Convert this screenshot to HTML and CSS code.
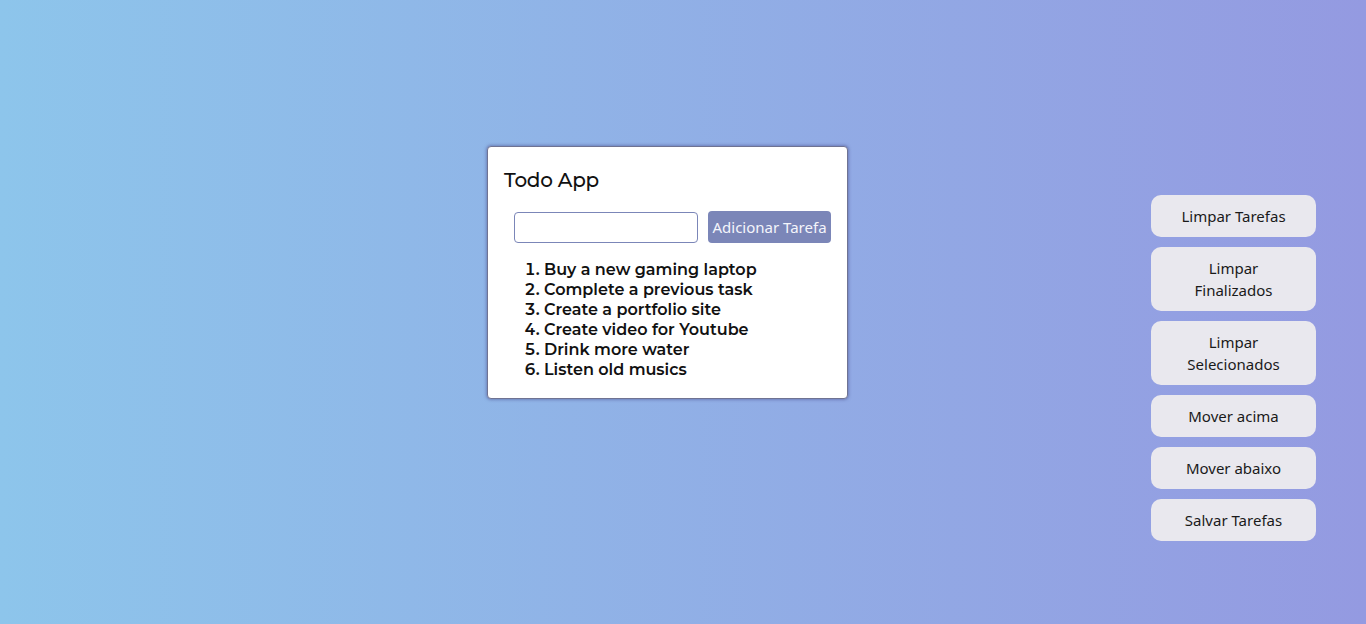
FILE: index.html
```html
<!DOCTYPE html>
<html lang="pt">
<head>
<meta charset="utf-8">
<title>Todo App</title>
<link rel="stylesheet" href="styles.css">
</head>
<body>
<div class="page">
  <main class="card">
    <h1 class="title">Todo App</h1>
    <div class="form">
      <input class="field" type="text">
      <button class="add">Adicionar Tarefa</button>
    </div>
    <ol class="list">
      <li>Buy a new gaming laptop</li>
      <li>Complete a previous task</li>
      <li>Create a portfolio site</li>
      <li>Create video for Youtube</li>
      <li>Drink more water</li>
      <li>Listen old musics</li>
    </ol>
  </main>
  <aside class="actions">
    <button class="act">Limpar Tarefas</button>
    <button class="act">Limpar Finalizados</button>
    <button class="act">Limpar Selecionados</button>
    <button class="act">Mover acima</button>
    <button class="act">Mover abaixo</button>
    <button class="act">Salvar Tarefas</button>
  </aside>
</div>
</body>
</html>
```
FILE: styles.css
```css
html, body {
  margin: 0;
  height: 100%;
}
body {
  background: linear-gradient(to right, #8dc5eb, #949ae1);
  font-family: "Noto Sans", sans-serif;
}
.page {
  display: flex;
  align-items: flex-start;
  height: 100%;
  box-sizing: border-box;
}
.card {
  margin: 146px 0 0 487px;
  width: 361px;
  box-sizing: border-box;
  background: #fff;
  border: 1px solid #6f7392;
  border-radius: 4px;
  box-shadow: 0 0 3px 1px rgba(80, 86, 150, 0.55);
  padding: 19px 16px 18px 16px;
  font-family: "Montserrat", "Noto Sans", sans-serif;
}
.title {
  margin: 0;
  font-size: 20px;
  font-weight: 500;
  letter-spacing: -0.25px;
  line-height: 28px;
  color: #111;
}
.form {
  display: flex;
  align-items: center;
  gap: 10px;
  margin: 17px 0 0 10px;
}
.field {
  width: 184px;
  height: 31px;
  box-sizing: border-box;
  border: 1px solid #7b86b8;
  border-radius: 4px;
  margin: 0;
  padding: 0 6px;
}
.add {
  height: 32px;
  width: 123px;
  box-sizing: border-box;
  border: 0;
  border-radius: 4px;
  background: #7b86b8;
  color: #f4f5fb;
  font-family: "Noto Sans", sans-serif;
  font-size: 15px;
  padding: 0;
  white-space: nowrap;
}
.list {
  margin: 17px 0 0 0;
  padding-left: 40px;
  font-size: 16px;
  font-weight: 600;
  line-height: 20px;
  color: #111;
}
.actions {
  display: flex;
  flex-direction: column;
  gap: 10px;
  margin: 195px 0 0 303px;
  width: 165px;
}
.act {
  border: 0;
  border-radius: 10px;
  background: #e9e8ee;
  color: #1a1a1a;
  font-family: "Noto Sans", sans-serif;
  font-size: 15px;
  line-height: 22px;
  padding: 10px 26px;
  margin: 0;
}
```
